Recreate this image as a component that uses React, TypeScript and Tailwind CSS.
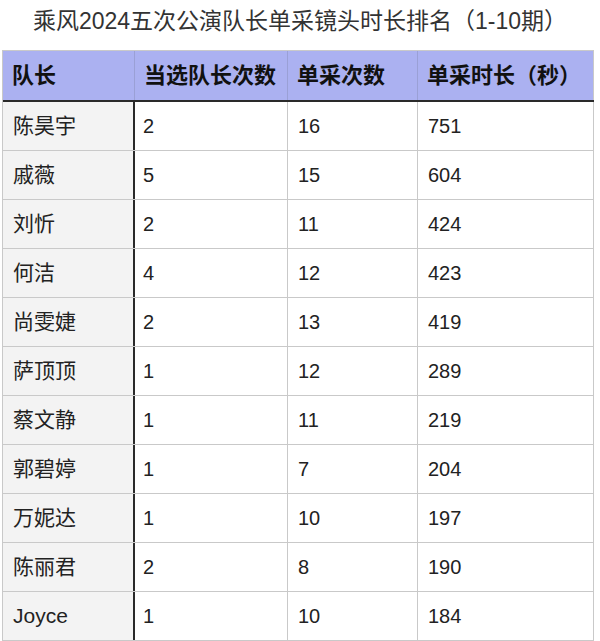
import React from "react";

const rows: [string, string, string, string][] = [
  ["陈昊宇", "2", "16", "751"],
  ["戚薇", "5", "15", "604"],
  ["刘忻", "2", "11", "424"],
  ["何洁", "4", "12", "423"],
  ["尚雯婕", "2", "13", "419"],
  ["萨顶顶", "1", "12", "289"],
  ["蔡文静", "1", "11", "219"],
  ["郭碧婷", "1", "7", "204"],
  ["万妮达", "1", "10", "197"],
  ["陈丽君", "2", "8", "190"],
  ["Joyce", "1", "10", "184"],
];

const headers = ["队长", "当选队长次数", "单采次数", "单采时长（秒）"];

export default function App() {
  return (
    <div
      className="w-[600px] h-[641px] bg-white overflow-hidden"
      style={{ fontFamily: '"Liberation Sans", "Noto Sans CJK SC", sans-serif' }}
    >
      <div className="h-[50px] flex items-center justify-center text-[23px] text-[#333] pb-[8px]">
        乘风2024五次公演队长单采镜头时长排名（1-10期）
      </div>
      <div className="ml-[2px] w-[592px] border-l border-t border-[#c9c9c9]">
        <div className="grid grid-cols-[132px_153px_130px_176px] bg-[#abb1f1] border-b-2 border-[#2a2a2a]">
          {headers.map((h, i) => (
            <div
              key={h}
              className={`h-[49px] flex items-center pl-[9px] text-[22px] font-bold text-[#111] border-r ${
                i === 3 ? "border-[#c9c9c9]" : "border-[#9aa0d6]"
              }`}
            >
              {h}
            </div>
          ))}
        </div>
        {rows.map((r) => (
          <div key={r[0]} className="grid grid-cols-[132px_153px_130px_176px] border-b border-[#c9c9c9]">
            <div className="h-[48px] flex items-center pl-[10px] text-[21px] text-[#222] bg-[#f3f3f3] border-r-2 border-[#2a2a2a]">
              {r[0]}
            </div>
            <div className="h-[48px] flex items-center pl-[8px] text-[20px] text-[#222] border-r border-[#c9c9c9]">
              {r[1]}
            </div>
            <div className="h-[48px] flex items-center pl-[10px] text-[20px] text-[#222] border-r border-[#c9c9c9]">
              {r[2]}
            </div>
            <div className="h-[48px] flex items-center pl-[10px] text-[20px] text-[#222] border-r border-[#c9c9c9]">
              {r[3]}
            </div>
          </div>
        ))}
      </div>
    </div>
  );
}
